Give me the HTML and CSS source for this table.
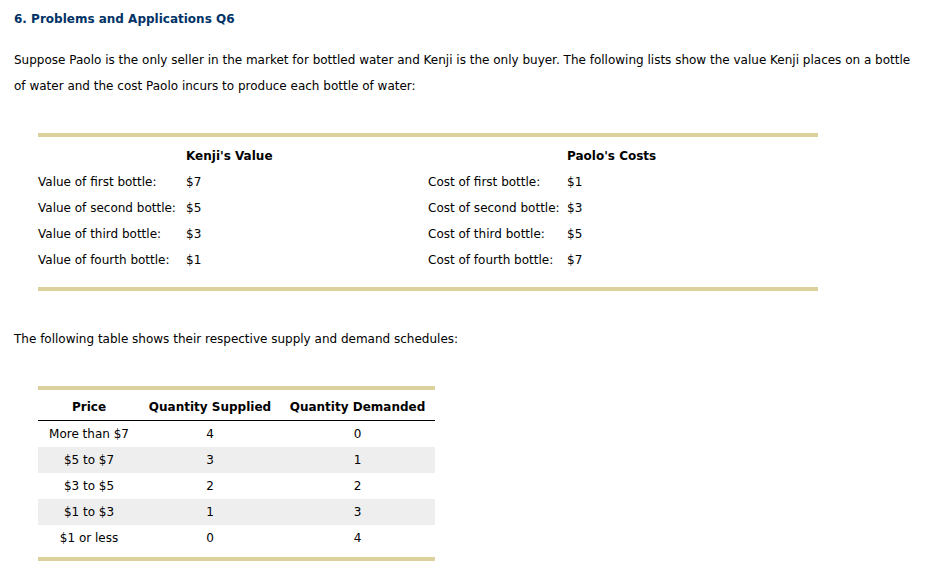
FILE: index.html
```html
<!DOCTYPE html>
<html>
<head>
<meta charset="utf-8">
<link rel="stylesheet" href="styles.css">
</head>
<body>
<h1 class="title">6. Problems and Applications Q6</h1>
<p class="intro">Suppose Paolo is the only seller in the market for bottled water and Kenji is the only buyer. The following lists show the value Kenji places on a bottle of water and the cost Paolo incurs to produce each bottle of water:</p>

<div class="lists">
  <div class="cell"></div>
  <div class="cell head">Kenji's Value</div>
  <div class="cell"></div>
  <div class="cell head">Paolo's Costs</div>

  <div class="cell">Value of first bottle:</div>
  <div class="cell">$7</div>
  <div class="cell">Cost of first bottle:</div>
  <div class="cell">$1</div>

  <div class="cell">Value of second bottle:</div>
  <div class="cell">$5</div>
  <div class="cell">Cost of second bottle:</div>
  <div class="cell">$3</div>

  <div class="cell">Value of third bottle:</div>
  <div class="cell">$3</div>
  <div class="cell">Cost of third bottle:</div>
  <div class="cell">$5</div>

  <div class="cell">Value of fourth bottle:</div>
  <div class="cell">$1</div>
  <div class="cell">Cost of fourth bottle:</div>
  <div class="cell">$7</div>
</div>

<p class="lead">The following table shows their respective supply and demand schedules:</p>

<div class="sched-wrap">
<table class="sched">
  <colgroup>
    <col class="c1"><col class="c2"><col class="c3">
  </colgroup>
  <thead>
    <tr><th>Price</th><th>Quantity Supplied</th><th>Quantity Demanded</th></tr>
  </thead>
  <tbody>
    <tr><td>More than $7</td><td>4</td><td>0</td></tr>
    <tr class="alt"><td>$5 to $7</td><td>3</td><td>1</td></tr>
    <tr><td>$3 to $5</td><td>2</td><td>2</td></tr>
    <tr class="alt"><td>$1 to $3</td><td>1</td><td>3</td></tr>
    <tr><td>$1 or less</td><td>0</td><td>4</td></tr>
  </tbody>
</table>
</div>
</body>
</html>
```
FILE: styles.css
```css
html, body {
  margin: 0;
  background: #ffffff;
}
body {
  padding: 11px 14px 0 14px;
  font-family: "DejaVu Sans", Verdana, sans-serif;
  font-size: 12px;
  color: #000000;
}
.title {
  margin: 0;
  font-size: 12px;
  line-height: 17px;
  font-weight: bold;
  color: #003366;
}
.intro {
  margin: 19px 0 0 0;
  max-width: 910px;
  line-height: 26px;
}
.lists {
  margin: 34px 0 0 24px;
  width: 780px;
  border-top: 4px solid #dcd09c;
  border-bottom: 4px solid #dcd09c;
  padding: 5px 0 15px 0;
  display: grid;
  grid-template-columns: 148px 242px 139px 1fr;
  grid-auto-rows: 26px;
}
.cell {
  line-height: 28px;
  white-space: nowrap;
}
.head {
  font-weight: bold;
}
.lead {
  margin: 34px 0 0 0;
  line-height: 28px;
}
.sched-wrap {
  margin: 33px 0 0 24px;
  width: 397px;
  border-top: 4px solid #dcd09c;
  border-bottom: 4px solid #dcd09c;
  padding: 4px 0 6px 0;
}
.sched {
  width: 397px;
  border-collapse: collapse;
  table-layout: fixed;
}
.c1 { width: 102px; }
.c2 { width: 140px; }
.c3 { width: 155px; }
.sched th {
  font-weight: bold;
  box-sizing: border-box;
  height: 26px;
  padding: 1px 0 0 0;
  line-height: 24px;
  text-align: center;
  border-bottom: 1px solid #000000;
  white-space: nowrap;
}
.sched td {
  box-sizing: border-box;
  height: 26px;
  padding: 1px 0 0 0;
  line-height: 25px;
  text-align: center;
  white-space: nowrap;
}
.sched tr.alt td {
  background: #eeeeee;
}
```
